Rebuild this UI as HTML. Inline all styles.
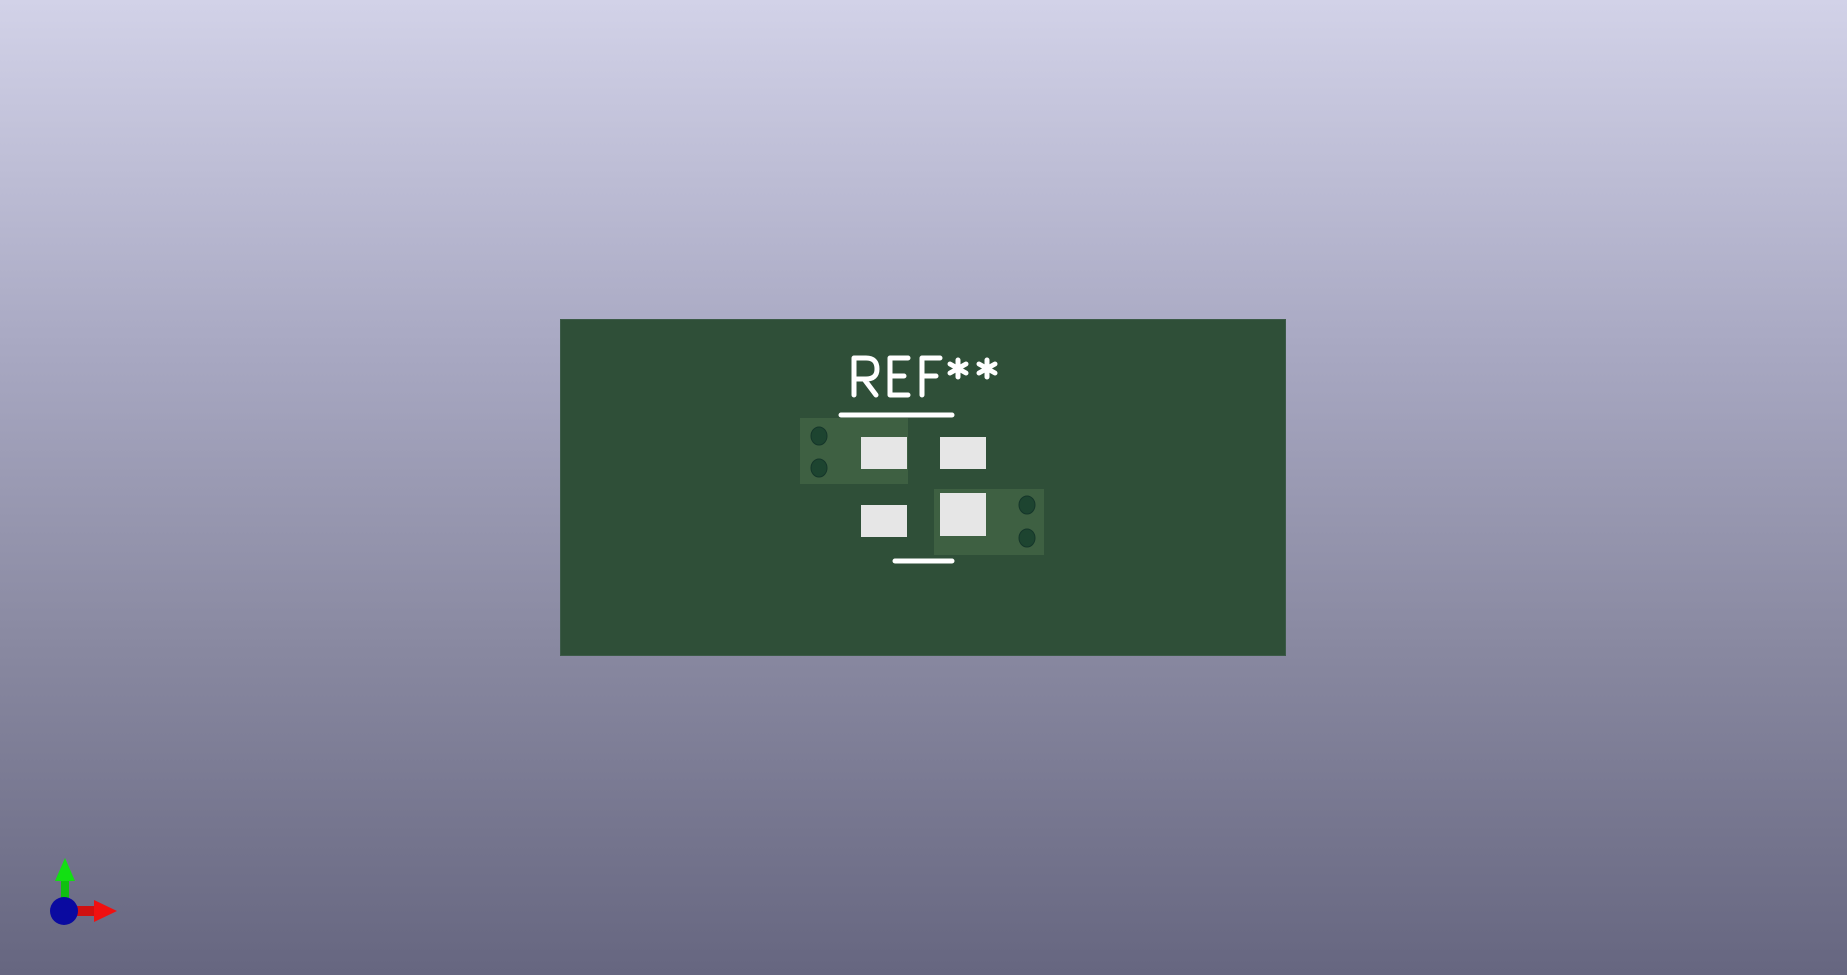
<!DOCTYPE html>
<html><head><meta charset="utf-8"><style>
html,body{margin:0;padding:0;width:1847px;height:975px;overflow:hidden}
body{background:linear-gradient(#d2d2e8 0%,#a9a9c3 35%,#8a8aa2 65%,#666680 100%);position:relative;font-family:"Liberation Sans",sans-serif}
.a{position:absolute}
</style></head><body>
<div class="a" style="left:561px;top:320px;width:724px;height:335px;background:#2f4f38;box-shadow:0 0 0 1px #3c5a48"></div>
<div class="a" style="left:800px;top:418px;width:108px;height:66px;background:#3e6042"></div>
<div class="a" style="left:934px;top:489px;width:110px;height:66px;background:#3e6042"></div>
<div class="a" style="left:861px;top:437px;width:46px;height:32px;background:#e6e6e6"></div>
<div class="a" style="left:940px;top:437px;width:46px;height:32px;background:#e6e6e6"></div>
<div class="a" style="left:861px;top:505px;width:46px;height:32px;background:#e6e6e6"></div>
<div class="a" style="left:940px;top:493px;width:46px;height:43px;background:#e6e6e6"></div>
<svg class="a" style="left:0;top:0" width="1847" height="975">
<g fill="#1d4430" stroke="#15362a" stroke-width="1">
<ellipse cx="819" cy="436" rx="8" ry="9"/><ellipse cx="819" cy="468" rx="8" ry="9"/>
<ellipse cx="1027" cy="505" rx="8" ry="9"/><ellipse cx="1027" cy="538" rx="8" ry="9"/>
</g>
<g stroke="#fff" stroke-width="5" stroke-linecap="round" stroke-linejoin="round" fill="none">
<line x1="841" y1="415" x2="952" y2="415"/>
<line x1="895" y1="561" x2="952" y2="561"/>
<path d="M854 395V358H866Q877 358 877 369Q877 379 866 379H855M864 379L876 395"/>
<path d="M908 358H890V395H908M890 376H904"/>
<path d="M940 358H922V395M922 376H936"/>
<path d="M958 360V377M950 364L966 373M966 364L950 373"/>
<path d="M987 360V377M979 364L995 373M995 364L979 373"/>
</g>
<rect x="61" y="876" width="8" height="24" fill="#10c010"/>
<polygon points="65,858 55,881 75,881" fill="#12e012"/>
<rect x="74" y="906" width="22" height="10" fill="#d01010"/>
<polygon points="117,911 94,900 94,922" fill="#f01010"/>
<circle cx="64" cy="911" r="14" fill="#0a0aa0"/>
</svg>
</body></html>
